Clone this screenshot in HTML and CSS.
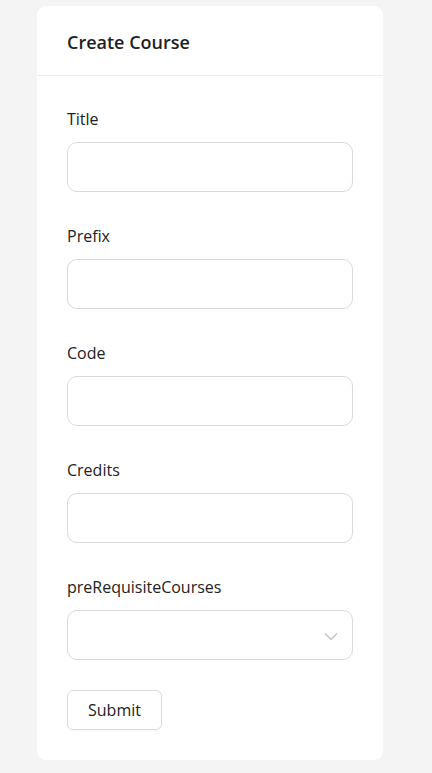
FILE: index.html
```html
<!DOCTYPE html>
<html>
<head>
<meta charset="utf-8">
<link rel="stylesheet" href="styles.css">
</head>
<body>
<div class="card">
  <div class="card-header">Create Course</div>
  <form class="card-body">
    <div class="field">
      <label class="label">Title</label>
      <div class="input"></div>
    </div>
    <div class="field">
      <label class="label">Prefix</label>
      <div class="input"></div>
    </div>
    <div class="field">
      <label class="label">Code</label>
      <div class="input"></div>
    </div>
    <div class="field">
      <label class="label">Credits</label>
      <div class="input"></div>
    </div>
    <div class="field">
      <label class="label">preRequisiteCourses</label>
      <div class="input select">
        <svg width="14" height="9" viewBox="0 0 14 9"><path d="M1 1.5 L7 7.5 L13 1.5" fill="none" stroke="#bfbfbf" stroke-width="1.2"/></svg>
      </div>
    </div>
    <div class="actions">
      <button type="button" class="btn">Submit</button>
    </div>
  </form>
</div>
</body>
</html>
```
FILE: styles.css
```css
* { box-sizing: border-box; }
html, body { margin: 0; padding: 0; }
body {
  background: #f4f4f4;
  font-family: "Open Sans", "Noto Sans", sans-serif;
  color: #222;
  width: 432px;
  height: 773px;
  overflow: hidden;
}
.card {
  margin: 6px 0 0 37px;
  width: 346px;
  height: 754px;
  background: #fff;
  border-radius: 9px;
}
.card-header {
  height: 70px;
  padding: 2px 30px 0;
  display: flex;
  align-items: center;
  font-weight: 600;
  font-size: 18px;
  color: #1f1f1f;
  border-bottom: 1px solid #ececec;
}
.card-body {
  padding: 31px 30px 30px;
  display: flex;
  flex-direction: column;
  margin: 0;
}
.field {
  display: flex;
  flex-direction: column;
  margin-bottom: 32px;
}
.label {
  font-size: 16px;
  line-height: 24px;
  height: 24px;
  margin-bottom: 11px;
  color: #222;
}
.input {
  height: 50px;
  border: 1px solid #d9d9d9;
  border-radius: 10px;
  background: #fff;
}
.select {
  display: flex;
  align-items: center;
  justify-content: flex-end;
  padding-right: 14px;
}
.select svg { margin-top: 2px; }
.actions {
  margin-top: -2px;
}
.btn {
  width: 95px;
  height: 40px;
  border: 1px solid #d9d9d9;
  border-radius: 6px;
  background: #fff;
  font-family: inherit;
  font-size: 16px;
  color: #222;
  box-shadow: 0 2px 0 rgba(0,0,0,0.02);
  padding: 0;
}
```
